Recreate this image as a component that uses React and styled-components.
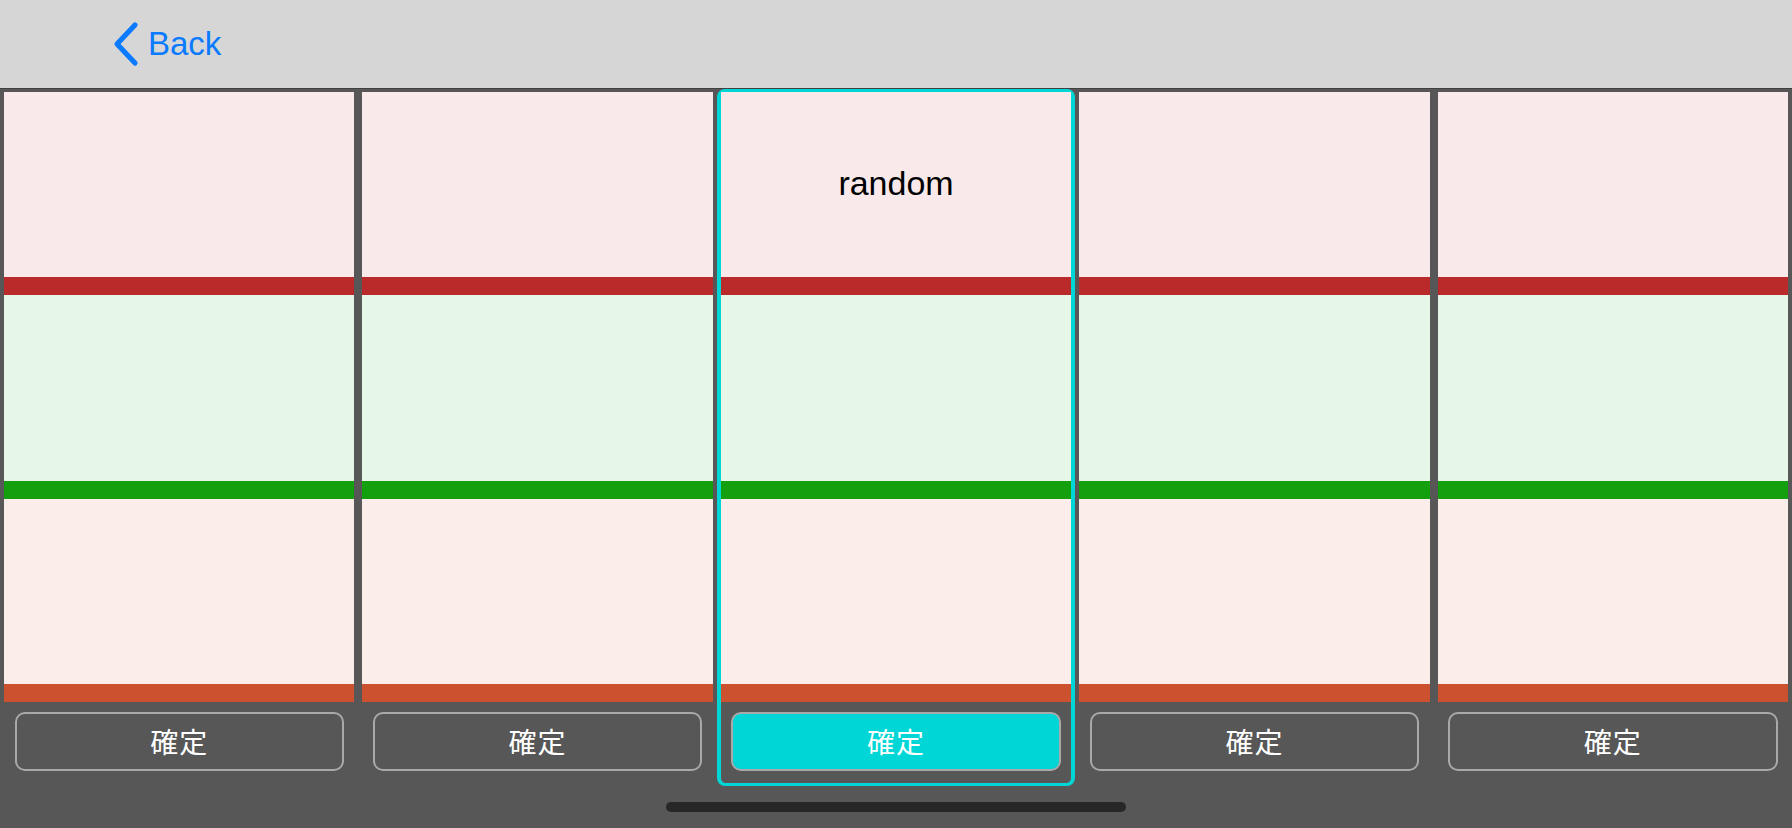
import React from "react";
import styled, { createGlobalStyle } from "styled-components";

const Global = createGlobalStyle`
  html, body { margin: 0; padding: 0; }
  body {
    background: #575757;
    font-family: "Liberation Sans", Arial, "Noto Sans CJK JP", sans-serif;
    overflow: hidden;
  }
`;

const Page = styled.div`
  width: 1792px;
  height: 828px;
  display: flex;
  flex-direction: column;
  background: #575757;
`;

const Header = styled.header`
  height: 88px;
  flex: none;
  background: #d6d6d6;
  border-bottom: 1px solid #404040;
  display: flex;
  align-items: center;
  padding-left: 112px;
  box-sizing: content-box;
`;

const BackButton = styled.button`
  display: flex;
  align-items: center;
  gap: 8px;
  border: none;
  background: none;
  padding: 0;
  color: #0a7aff;
  font-family: "Liberation Sans", Arial, sans-serif;
  font-size: 33px;
  cursor: pointer;
`;

const Columns = styled.main`
  display: flex;
  height: 697px;
  flex: none;
`;

const Column = styled.section`
  flex: 1 1 0;
  min-width: 0;
  display: flex;
  flex-direction: column;
  border-style: solid;
  border-width: 3px 4px 3px 4px;
  border-color: ${(p) => (p.$selected ? "#00d6d6" : "transparent")};
  border-radius: ${(p) => (p.$selected ? "8px" : "0")};
`;

const Slot = styled.div`
  flex: 1 1 0;
  background: ${(p) => p.$bg};
  border-bottom: 18px solid ${(p) => p.$bar};
  display: flex;
  justify-content: center;
  align-items: flex-start;
`;

const Label = styled.span`
  margin-top: 72px;
  font-family: "Liberation Sans", Arial, sans-serif;
  font-size: 34px;
  color: #000;
`;

const Actions = styled.div`
  height: 81px;
  flex: none;
  box-sizing: border-box;
  padding: 10px 10.5px 12px;
  display: flex;
`;

const ConfirmButton = styled.button`
  flex: 1;
  border: 2px solid #a9a9a9;
  border-radius: 10px;
  background: ${(p) => (p.$selected ? "#00d6d6" : "transparent")};
  color: #ffffff;
  font-family: "Noto Sans CJK JP", "Noto Sans CJK SC", sans-serif;
  font-size: 28px;
  font-weight: 400;
  letter-spacing: 1px;
  cursor: pointer;
  padding: 0;
`;

const Footer = styled.footer`
  flex: 1;
  display: flex;
  justify-content: center;
  padding-top: 16px;
`;

const HomeIndicator = styled.div`
  width: 460px;
  height: 10px;
  border-radius: 5px;
  background: #272727;
`;

const Chevron = () => (
  <svg width="28" height="46" viewBox="0 0 28 46" fill="none">
    <path
      d="M23 4 L5 23 L23 42"
      stroke="#0a7aff"
      strokeWidth="5.2"
      strokeLinecap="round"
      strokeLinejoin="round"
    />
  </svg>
);

const SLOTS = [
  { bg: "#f9e9ea", bar: "#bb2a2a" },
  { bg: "#e6f6e7", bar: "#149f0f" },
  { bg: "#fbedea", bar: "#cb512f" },
];

const COLUMNS = [
  { label: "" },
  { label: "" },
  { label: "random", selected: true },
  { label: "" },
  { label: "" },
];

export default function App() {
  return (
    <>
      <Global />
      <Page>
        <Header>
          <BackButton>
            <Chevron />
            <span>Back</span>
          </BackButton>
        </Header>
        <Columns>
          {COLUMNS.map((col, i) => (
            <Column key={i} $selected={col.selected}>
              {SLOTS.map((s, j) => (
                <Slot key={j} $bg={s.bg} $bar={s.bar}>
                  {j === 0 && col.label ? <Label>{col.label}</Label> : null}
                </Slot>
              ))}
              <Actions>
                <ConfirmButton $selected={col.selected}>確定</ConfirmButton>
              </Actions>
            </Column>
          ))}
        </Columns>
        <Footer>
          <HomeIndicator />
        </Footer>
      </Page>
    </>
  );
}
